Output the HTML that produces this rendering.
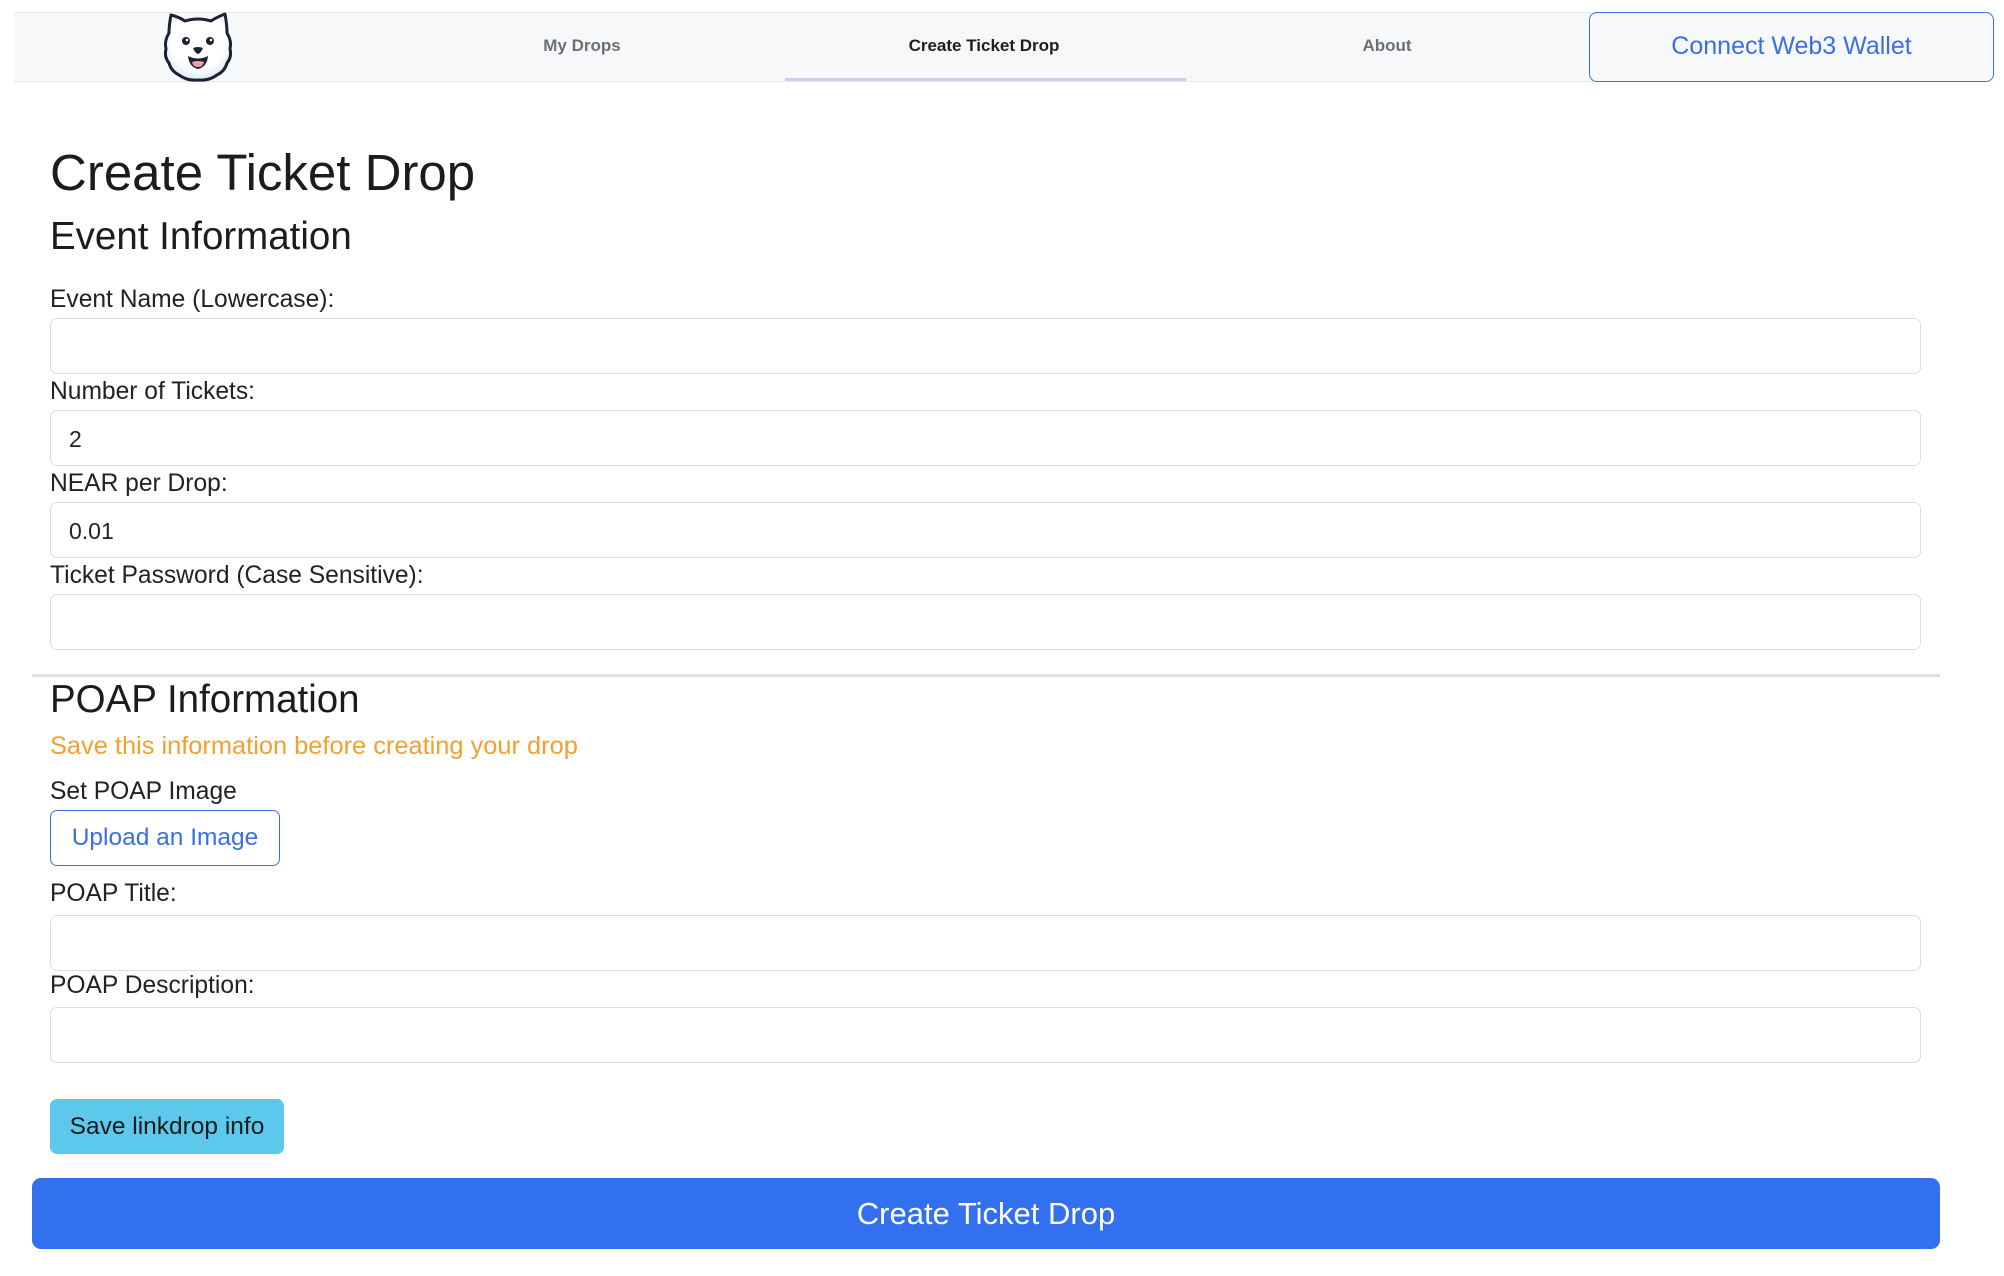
<!DOCTYPE html>
<html><head><meta charset="utf-8"><style>
*{box-sizing:border-box;margin:0;padding:0}
body{width:2004px;height:1276px;background:#fff;font-family:"Liberation Sans",sans-serif;color:#1e1e1e;position:relative;overflow:hidden}
.a{position:absolute;white-space:nowrap}
.nav{position:absolute;left:14px;top:12px;width:1580px;height:70px;background:#f7f8fa;border-top:1px solid #e6e8eb;border-bottom:1px solid #e6e8eb}
.nl{position:absolute;top:36px;font-size:17px;font-weight:bold;color:#6c6f74;transform:translateX(-50%)}
.lab{position:absolute;left:50px;font-size:24.6px;color:#222;line-height:1}
.inp{position:absolute;left:50px;width:1871px;height:56px;border:1.5px solid #dadde1;border-radius:7px;background:#fff;font-size:23px;padding:15px 18px;color:#222}
h1,h2{position:absolute;left:50px;font-weight:400;line-height:1;color:#1c1c1c}
</style></head><body>
<div class="nav"></div>
<svg class="a" style="left:161px;top:11px" width="74" height="72" viewBox="0 0 74 72">
<defs><radialGradient id="g" cx="50%" cy="40%" r="60%"><stop offset="0" stop-color="#fff"/><stop offset="0.7" stop-color="#fff"/><stop offset="1" stop-color="#dcecf7"/></radialGradient></defs>
<path d="M10 4 Q18 6 24 10 Q37 6 50 10 Q56 6 64 3 Q66 14 66 22 Q71 30 69 38 Q71 46 66 52 Q64 60 56 64 Q48 70 37 69 Q26 70 18 64 Q10 60 8 52 Q3 46 5 38 Q3 30 8 22 Q8 14 10 4Z" fill="url(#g)" stroke="#1c2233" stroke-width="3" stroke-linejoin="round"/>
<circle cx="25" cy="30" r="4" fill="#1c2233"/><circle cx="49" cy="30" r="4" fill="#1c2233"/>
<circle cx="26" cy="29" r="1.3" fill="#fff"/><circle cx="50" cy="29" r="1.3" fill="#fff"/>
<path d="M32 37 Q37 35 42 37 Q40 42 37 43 Q34 42 32 37Z" fill="#1c2233"/>
<path d="M27 45 Q37 50 47 45 Q46 56 37 58 Q28 56 27 45Z" fill="#1c2233"/>
<path d="M31 51 Q37 49 43 51 Q42 56 37 56 Q32 56 31 51Z" fill="#f29bb7"/>
</svg>
<div class="nl" style="left:582px">My Drops</div>
<div class="nl" style="left:984px;color:#1e1e1e">Create Ticket Drop</div>
<div class="a" style="left:785px;top:78px;width:401px;height:3px;background:#dcc6f0"></div>
<div class="nl" style="left:1387px">About</div>
<div class="a" style="left:1589px;top:12px;width:405px;height:70px;border:1.5px solid #3b6fe8;border-radius:8px;background:#f7f8fa;color:#3a6ee8;font-size:25px;text-align:center;line-height:67px">Connect Web3 Wallet</div>

<h1 style="top:147px;font-size:51px">Create Ticket Drop</h1>
<h2 style="top:218px;font-size:38.5px">Event Information</h2>

<div class="lab" style="top:288px">Event Name (Lowercase):</div>
<div class="inp" style="top:318px"></div>
<div class="lab" style="top:380px">Number of Tickets:</div>
<div class="inp" style="top:410px">2</div>
<div class="lab" style="top:472px">NEAR per Drop:</div>
<div class="inp" style="top:502px">0.01</div>
<div class="lab" style="top:564px">Ticket Password (Case Sensitive):</div>
<div class="inp" style="top:594px"></div>

<div class="a" style="left:32px;top:674px;width:1908px;height:3px;background:#dde0e4"></div>
<h2 style="top:681px;font-size:38.5px">POAP Information</h2>
<div class="lab" style="top:734px;color:#f2a031;font-size:25.4px">Save this information before creating your drop</div>
<div class="lab" style="top:780px">Set POAP Image</div>
<div class="a" style="left:50px;top:810px;width:230px;height:56px;border:1.5px solid #3b6fe8;border-radius:7px;color:#3a6ee8;font-size:24.5px;text-align:center;line-height:53px">Upload an Image</div>
<div class="lab" style="top:882px">POAP Title:</div>
<div class="inp" style="top:915px"></div>
<div class="lab" style="top:974px">POAP Description:</div>
<div class="inp" style="top:1007px"></div>

<div class="a" style="left:50px;top:1099px;width:234px;height:55px;background:#5bc8ec;border-radius:7px;color:#1a1a1a;font-size:24.5px;text-align:center;line-height:55px">Save linkdrop info</div>
<div class="a" style="left:32px;top:1178px;width:1908px;height:71px;background:#3370f0;border-radius:9px;color:#fff;font-size:31px;text-align:center;line-height:71px">Create Ticket Drop</div>
</body></html>
